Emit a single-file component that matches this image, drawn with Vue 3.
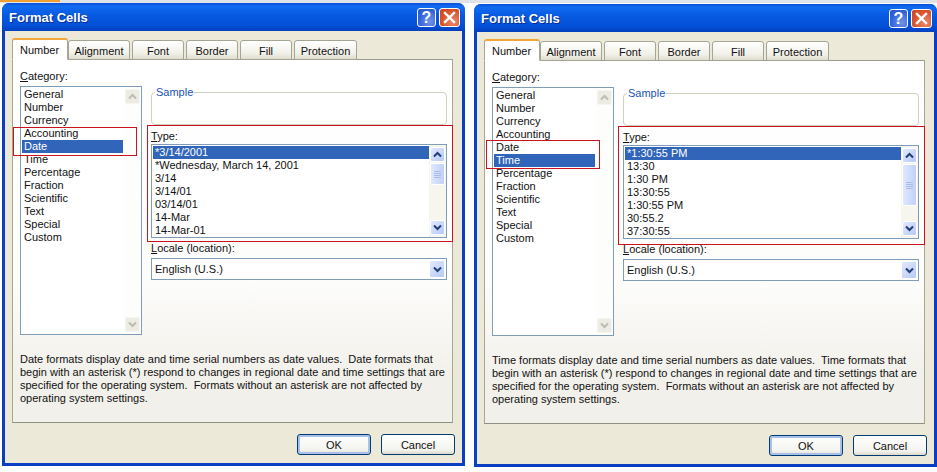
<script setup>
const tabs = ['Number', 'Alignment', 'Font', 'Border', 'Fill', 'Protection']
const tabW = [56, 62, 52, 52, 52, 63]
const cats = ['General', 'Number', 'Currency', 'Accounting', 'Date', 'Time', 'Percentage', 'Fraction', 'Scientific', 'Text', 'Special', 'Custom']
const dialogs = [
  {
    sel: 'Date',
    types: ['*3/14/2001', '*Wednesday, March 14, 2001', '3/14', '3/14/01', '03/14/01', '14-Mar', '14-Mar-01'],
    thumb: 22,
    desc: [
      'Date formats display date and time serial numbers as date values.  Date formats that',
      'begin with an asterisk (*) respond to changes in regional date and time settings that are',
      'specified for the operating system.  Formats without an asterisk are not affected by',
      'operating system settings.'
    ],
    catBox: { left: '0px', top: '67px', width: '124px', height: '29px' },
    typeBox: { left: '134px', top: '65px', width: '306px', height: '117px' }
  },
  {
    sel: 'Time',
    types: ['*1:30:55 PM', '13:30', '1:30 PM', '13:30:55', '1:30:55 PM', '30:55.2', '37:30:55'],
    thumb: 42,
    desc: [
      'Time formats display date and time serial numbers as date values.  Time formats that',
      'begin with an asterisk (*) respond to changes in regional date and time settings that are',
      'specified for the operating system.  Formats without an asterisk are not affected by',
      'operating system settings.'
    ],
    catBox: { left: '1px', top: '79px', width: '114px', height: '29px' },
    typeBox: { left: '133px', top: '65px', width: '307px', height: '119px' }
  }
]
</script>

<template>
  <div class="stage">
    <div class="strip"><i class="strip-orange"></i></div>
    <div class="windows">
      <section v-for="d in dialogs" :key="d.sel" class="window">
        <header class="title">
          <span class="title-text">Format Cells</span>
          <span class="cap cap-help">?</span>
          <span class="cap cap-close">
            <svg width="13" height="13" viewBox="0 0 13 13"><path d="M2 2 L11 11 M11 2 L2 11" stroke="#fff" stroke-width="2.4" stroke-linecap="square" /></svg>
          </span>
        </header>
        <div class="client">
          <nav class="tabs">
            <span
              v-for="(t, i) in tabs"
              :key="t"
              class="tab"
              :class="{ active: i === 0 }"
              :style="{ width: tabW[i] + 'px' }"
            >{{ t }}</span>
          </nav>
          <div class="panel">
            <div class="cols">
              <div class="col-left">
                <div class="label"><u>C</u>ategory:</div>
                <div class="catlist">
                  <div class="cat-items">
                    <div v-for="c in cats" :key="c" class="item" :class="{ sel: c === d.sel }">{{ c }}</div>
                  </div>
                  <div class="cat-bar">
                    <span class="dis-btn"><svg width="9" height="7" viewBox="0 0 9 7"><path d="M1 5.5 L4.5 2 L8 5.5" fill="none" stroke="#bdbcb2" stroke-width="2" /></svg></span>
                    <span class="dis-btn"><svg width="9" height="7" viewBox="0 0 9 7"><path d="M1 1.5 L4.5 5 L8 1.5" fill="none" stroke="#bdbcb2" stroke-width="2" /></svg></span>
                  </div>
                </div>
              </div>
              <div class="col-right">
                <div class="sample"><span class="legend">Sample</span></div>
                <div class="label type-label"><u>T</u>ype:</div>
                <div class="typelist">
                  <div class="type-items">
                    <div v-for="(t, i) in d.types" :key="t" class="item" :class="{ sel: i === 0 }">{{ t }}</div>
                  </div>
                  <div class="type-bar">
                    <span class="sb-btn"><svg width="9" height="7" viewBox="0 0 9 7"><path d="M1 5.5 L4.5 2 L8 5.5" fill="none" stroke="#1f3f7a" stroke-width="2" /></svg></span>
                    <span class="sb-thumb" :style="{ height: d.thumb + 'px' }"><i></i><i></i><i></i><i></i></span>
                    <span class="sb-btn sb-end"><svg width="9" height="7" viewBox="0 0 9 7"><path d="M1 1.5 L4.5 5 L8 1.5" fill="none" stroke="#1f3f7a" stroke-width="2" /></svg></span>
                  </div>
                </div>
                <div class="label locale-label"><u>L</u>ocale (location):</div>
                <div class="combo">
                  <span class="combo-text">English (U.S.)</span>
                  <span class="sb-btn combo-btn"><svg width="9" height="7" viewBox="0 0 9 7"><path d="M1 1.5 L4.5 5 L8 1.5" fill="none" stroke="#1f3f7a" stroke-width="2" /></svg></span>
                </div>
              </div>
            </div>
            <div class="desc">
              <div v-for="line in d.desc" :key="line" class="desc-line">{{ line }}</div>
            </div>
            <div class="red" :style="d.catBox"></div>
            <div class="red" :style="d.typeBox"></div>
          </div>
          <footer class="actions">
            <span class="btn btn-default">OK</span>
            <span class="btn">Cancel</span>
          </footer>
        </div>
      </section>
    </div>
  </div>
</template>

<style scoped>
.stage {
  width: 937px;
  height: 472px;
  overflow: hidden;
  background: #fff;
  font-family: "Liberation Sans", Arial, sans-serif;
  font-size: 11px;
  color: #111;
  line-height: 13px;
}
.strip {
  height: 3px;
  background: #dfe3ea;
}
.strip-orange {
  display: block;
  width: 60px;
  height: 2px;
  background: #f0a030;
}
.windows {
  display: flex;
  gap: 9px;
  padding-left: 2px;
  width: 960px;
}
.window {
  flex: none;
  width: 463px;
  height: 463px;
  box-sizing: border-box;
  border: 3px solid #0a3fc4;
  border-top: 0;
  border-radius: 7px 7px 0 0;
  background: #ece9d8;
}
.window:nth-child(2) {
  margin-top: 1px;
}
.title {
  height: 28px;
  margin: 0 -3px;
  padding: 0 5px 0 7px;
  display: flex;
  align-items: center;
  gap: 3px;
  border-radius: 7px 7px 0 0;
  background: linear-gradient(#0a4fd6 0, #0f6cf0 12%, #0758e0 45%, #0450d8 80%, #0340bd 100%);
}
.title-text {
  flex: 1;
  color: #fff;
  font-weight: 700;
  font-size: 13px;
  padding-top: 1px;
  text-shadow: 1px 1px 0 #0a2f90;
}
.cap {
  flex: none;
  width: 19px;
  height: 19px;
  box-sizing: border-box;
  border: 1px solid #fff;
  border-radius: 3px;
  display: flex;
  align-items: center;
  justify-content: center;
  color: #fff;
  font-weight: 700;
  font-size: 16px;
}
.cap-help {
  background: radial-gradient(circle at 70% 75%, #6f93ea, #2f62d8 65%, #2a55c4);
}
.cap-close {
  width: 21px;
  background: radial-gradient(circle at 70% 75%, #e98a6c, #d9542a 60%, #c8401c);
}
.client {
  padding: 7px 9px 0 7px;
}
.tabs {
  display: flex;
  height: 22px;
  gap: 2px;
  position: relative;
  z-index: 1;
  margin-bottom: -1px;
  align-items: flex-end;
}
.tab {
  box-sizing: border-box;
  height: 20px;
  border: 1px solid #a5a596;
  border-radius: 3px 3px 0 0;
  background: linear-gradient(#fff, #f1f0e8 70%, #dedccd);
  text-align: center;
  line-height: 21px;
}
.tab.active {
  height: 22px;
  margin-right: -2px;
  border-top: 2px solid #f0a63a;
  border-bottom-color: #fff;
  background: #fff;
  line-height: 20px;
  text-align: left;
  padding-left: 7px;
}
.panel {
  position: relative;
  box-sizing: border-box;
  height: 364px;
  padding: 10px 0 0 7px;
  border: 1px solid #a6a696;
  border-top-color: #9c9c8e;
  border-bottom-color: #8f8f82;
  background: linear-gradient(#fff, #fdfdfc 60%, #f2f0ea 88%);
}
.cols {
  display: flex;
  gap: 9px;
}
.col-left {
  width: 122px;
}
.col-right {
  width: 296px;
}
.label u {
  text-decoration-thickness: 1px;
}
.catlist {
  margin-top: 3px;
  height: 249px;
  box-sizing: border-box;
  border: 1px solid #7f9db9;
  background: #fff;
  display: flex;
}
.cat-items {
  flex: 1;
  padding: 1px 1px 0 1px;
}
.item {
  height: 13px;
  line-height: 13px;
  padding-left: 2px;
  white-space: nowrap;
}
.item.sel {
  background: #3165ba;
  color: #fff;
}
.cat-bar {
  width: 17px;
  padding: 2px 1px;
  box-sizing: border-box;
  background: #fdfdfb;
  display: flex;
  flex-direction: column;
  justify-content: space-between;
}
.dis-btn {
  height: 15px;
  border-radius: 2px;
  background: #ecebe4;
  border: 1px solid #f6f5ef;
  box-sizing: border-box;
  display: flex;
  align-items: center;
  justify-content: center;
}
.sample {
  position: relative;
  margin-top: 22px;
  height: 33px;
  box-sizing: border-box;
  border: 1px solid #d0d0bf;
  border-radius: 4px;
}
.legend {
  position: absolute;
  left: 3px;
  top: -7px;
  padding: 0 1px;
  background: #fff;
  color: #1a52b8;
}
.type-label {
  margin-top: 5px;
}
.typelist {
  margin-top: 1px;
  height: 94px;
  box-sizing: border-box;
  border: 1px solid #7f9db9;
  background: #fff;
  display: flex;
}
.type-items {
  flex: 1;
  padding: 1px 0 0 1px;
}
.type-bar {
  width: 17px;
  box-sizing: border-box;
  padding: 2px 1px;
  background: #f6f5ee;
  display: flex;
  flex-direction: column;
  gap: 1px;
}
.sb-btn {
  flex: none;
  height: 15px;
  border-radius: 2px;
  border: 1px solid #fff;
  box-sizing: border-box;
  background: linear-gradient(135deg, #e2eafe, #b6c8f6);
  display: flex;
  align-items: center;
  justify-content: center;
}
.sb-end {
  margin-top: auto;
}
.sb-thumb {
  flex: none;
  box-sizing: border-box;
  border: 1px solid #fff;
  border-radius: 2px;
  background: linear-gradient(90deg, #dfe8fe, #c2d1f8);
  display: flex;
  flex-direction: column;
  align-items: center;
  justify-content: center;
  gap: 1px;
}
.sb-thumb i {
  display: block;
  width: 7px;
  height: 1px;
  background: #a6bcec;
}
.locale-label {
  margin-top: 4px;
}
.combo {
  margin-top: 3px;
  height: 22px;
  box-sizing: border-box;
  border: 1px solid #7f9db9;
  background: #fff;
  display: flex;
  align-items: center;
  padding: 1px;
}
.combo-text {
  flex: 1;
  padding-left: 2px;
}
.combo-btn {
  width: 16px;
  height: 18px;
}
.desc {
  margin-top: 18px;
}
.desc-line {
  white-space: pre;
  height: 13px;
}
.red {
  position: absolute;
  box-sizing: border-box;
  border: 1px solid #c8141e;
}
.actions {
  display: flex;
  justify-content: flex-end;
  gap: 10px;
  margin-top: 11px;
  margin-right: -2px;
}
.btn {
  width: 74px;
  height: 21px;
  box-sizing: border-box;
  border: 1px solid #003c74;
  border-radius: 3px;
  background: linear-gradient(#fff, #f3f3ee 80%, #dcd8ca);
  text-align: center;
  line-height: 21px;
}
.btn-default {
  box-shadow: inset 0 0 0 2px #a9c0ea;
}
</style>
